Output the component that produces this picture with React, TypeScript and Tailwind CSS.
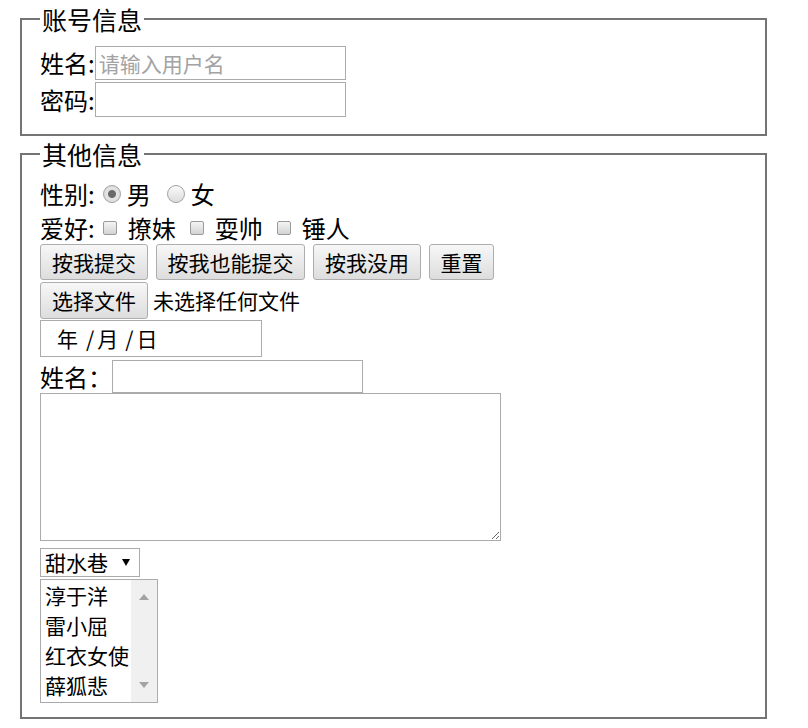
import React from 'react';

const HOBBIES = ['撩妹', '耍帅', '锤人'];
const PEOPLE = ['淳于洋', '雷小屈', '红衣女使', '薛狐悲'];

const buttonClass =
  'h-[36px] rounded-[3px] border border-[#adadad] bg-[linear-gradient(#f7f7f7,#dddddd)] text-[21px] leading-none text-black';

const inputClass =
  'border border-[#ababab] bg-white px-[3px] text-[21px] text-black outline-none placeholder:text-[#a3a3a3]';

export default function App() {
  return (
    <div className="min-h-screen bg-white px-[20px] pt-[3px] font-['Microsoft_YaHei','Noto_Sans_CJK_SC',sans-serif] text-[24px] text-black">
      {/* 账号信息 */}
      <fieldset className="w-[747px] border-2 border-[#747474] pl-[18px] pt-[9px] pb-[16px]">
        <legend className="px-[2px] text-[25px] leading-[32px]">账号信息</legend>
        <div className="flex h-[37px] items-center">
          <label htmlFor="user">姓名:</label>
          <input id="user" type="text" placeholder="请输入用户名" className={`h-[34px] w-[251px] ${inputClass}`} />
        </div>
        <div className="flex h-[37px] items-center">
          <label htmlFor="pwd">密码:</label>
          <input id="pwd" type="password" className={`h-[35px] w-[251px] ${inputClass}`} />
        </div>
      </fieldset>

      {/* 其他信息 */}
      <fieldset className="mt-[2px] w-[747px] border-2 border-[#747474] pl-[18px] pt-[6px] pb-[14px]">
        <legend className="px-[2px] text-[25px] leading-[32px]">其他信息</legend>

        <div className="flex h-[36px] items-center">
          <span>性别:</span>
          <input
            type="radio"
            name="sex"
            defaultChecked
            className="ml-[8px] h-[18px] w-[18px] appearance-none rounded-full border border-[#a2a2a2] bg-[linear-gradient(#fafafa,#dcdcdc)] checked:bg-[radial-gradient(circle,#6a6a6a_0,#6a6a6a_3.5px,#e4e4e4_4.5px,#d6d6d6_100%)]"
          />
          <span className="ml-[6px]">男</span>
          <input
            type="radio"
            name="sex"
            className="ml-[16px] h-[18px] w-[18px] appearance-none rounded-full border border-[#a2a2a2] bg-[linear-gradient(#fafafa,#dcdcdc)] checked:bg-[radial-gradient(circle,#6a6a6a_0,#6a6a6a_3.5px,#e4e4e4_4.5px,#d6d6d6_100%)]"
          />
          <span className="ml-[6px]">女</span>
        </div>

        <div className="flex h-[32px] items-center">
          <span>爱好:</span>
          {HOBBIES.map((hobby, i) => (
            <label key={hobby} className="flex items-center">
              <input
                type="checkbox"
                className={`${i === 0 ? 'ml-[8px]' : 'ml-[14px]'} h-[14px] w-[14px] appearance-none rounded-[2px] border border-[#9a9a9a] bg-[linear-gradient(#f4f4f4,#d4d4d4)] checked:bg-[#7a7a7a]`}
              />
              <span className="ml-[11px]">{hobby}</span>
            </label>
          ))}
        </div>

        <div className="flex h-[37px] items-start gap-[8px]">
          <button type="submit" className={`w-[108px] ${buttonClass}`}>按我提交</button>
          <button type="submit" className={`w-[149px] ${buttonClass}`}>按我也能提交</button>
          <button type="button" className={`w-[108px] ${buttonClass}`}>按我没用</button>
          <button type="reset" className={`w-[65px] ${buttonClass}`}>重置</button>
        </div>

        <div className="flex h-[39px] items-center">
          <button type="button" className={`w-[108px] !h-[37px] ${buttonClass}`}>选择文件</button>
          <span className="ml-[5px] text-[21px]">未选择任何文件</span>
        </div>

        <div className="flex h-[37px] w-[222px] items-center border border-[#ababab] text-[21px]">
          <span className="ml-[16px]">年</span>
          <span className="ml-[8px]">/</span>
          <span className="ml-[3px]">月</span>
          <span className="ml-[7px]">/</span>
          <span className="ml-[3px]">日</span>
        </div>

        <div className="mt-[3px] flex h-[33px] items-center">
          <label htmlFor="name2">姓名：</label>
          <input id="name2" type="text" className={`h-[33px] w-[251px] ${inputClass}`} />
        </div>

        <textarea className="block h-[148px] w-[461px] border border-[#ababab] bg-white text-[21px] outline-none" />

        <div className="mt-[7px] flex h-[29px] w-[100px] items-center border border-[#ababab] bg-white pl-[4px] text-[21px]">
          <span>甜水巷</span>
          <svg width="8" height="7" viewBox="0 0 8 7" className="ml-[14px]">
            <path d="M0 0 L8 0 L4 7 Z" fill="#000" />
          </svg>
        </div>

        <div role="listbox" className="mt-[2px] flex h-[124px] w-[118px] border border-[#ababab] bg-white text-[21px]">
          <div className="flex-1 pl-[4px]">
            {PEOPLE.map((p) => (
              <div key={p} role="option" className="h-[30px] leading-[30px] whitespace-nowrap">
                {p}
              </div>
            ))}
          </div>
          <div className="flex w-[26px] flex-col items-center justify-between bg-[#f0f0f0] py-[14px]">
            <svg width="10" height="6" viewBox="0 0 10 6">
              <path d="M0 6 L10 6 L5 0 Z" fill="#a3a3a3" />
            </svg>
            <svg width="10" height="6" viewBox="0 0 10 6">
              <path d="M0 0 L10 0 L5 6 Z" fill="#a3a3a3" />
            </svg>
          </div>
        </div>
      </fieldset>
    </div>
  );
}
